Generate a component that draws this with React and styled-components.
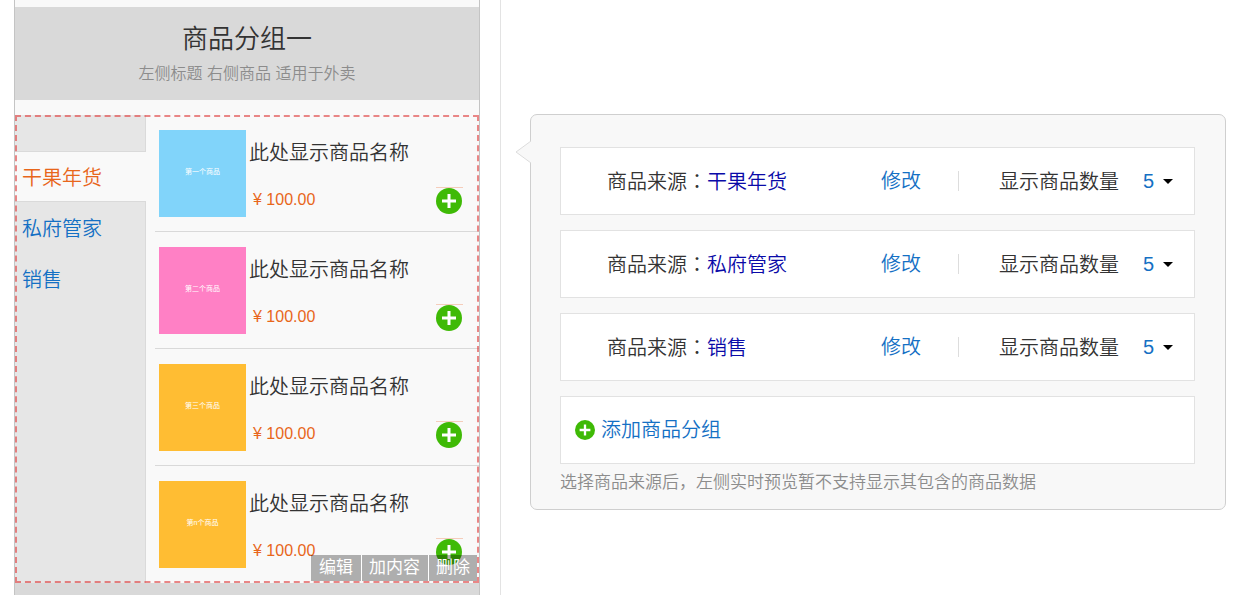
import React, { useState } from 'react';
import styled, { createGlobalStyle } from 'styled-components';

const categories = ['干果年货', '私府管家', '销售'];

const products = [
  { id: 1, cover: '第一个商品', color: '#81d4fa' },
  { id: 2, cover: '第二个商品', color: '#ff80c5' },
  { id: 3, cover: '第三个商品', color: '#ffbd33' },
  { id: 4, cover: '第n个商品', color: '#ffbd33' },
];

const PlusIcon = ({ size }) => (
  <svg width={size} height={size} viewBox="0 0 26 26" aria-hidden="true">
    <circle cx="13" cy="13" r="13" fill="#3fba06" />
    <path d="M13 6v14M6 13h14" stroke="#fff" strokeWidth="3" />
  </svg>
);

const Product = ({ cover, color }) => (
  <StyledProduct>
    <Cover $color={color}>{cover}</Cover>
    <ProductInfo>
      <ProductName>此处显示商品名称</ProductName>
      <Price>¥ 100.00</Price>
    </ProductInfo>
    <AddButton type="button" aria-label="加入">
      <PlusIcon size={26} />
    </AddButton>
  </StyledProduct>
);

const GroupRow = ({ name, index }) => {
  const [count, setCount] = useState('5');

  return (
    <Card>
      <Source>
        商品来源<Colon>：</Colon>
        <SourceLink href="#source">{name}</SourceLink>
      </Source>
      <EditLink href="#edit">修改</EditLink>
      <Divider />
      <CountLabel htmlFor={`count-${index}`}>显示商品数量</CountLabel>
      <SelectWrap>
        <CountSelect
          id={`count-${index}`}
          value={count}
          onChange={(e) => setCount(e.target.value)}
        >
          <option>5</option>
          <option>10</option>
          <option>15</option>
        </CountSelect>
        <Caret width="10" height="5" viewBox="0 0 10 5" aria-hidden="true">
          <path d="M0 0h10L5 5z" fill="#000" />
        </Caret>
      </SelectWrap>
    </Card>
  );
};

const App = () => (
  <>
    <GlobalStyle />
    <Page>
      <Preview>
        <GroupHeader>
          <GroupTitle>商品分组一</GroupTitle>
          <GroupSubtitle>左侧标题 右侧商品 适用于外卖</GroupSubtitle>
        </GroupHeader>
        <GroupBody>
          <Sidebar>
            {categories.map((name, i) => (
              <Category key={name} href="#category" $active={i === 0}>
                {name}
              </Category>
            ))}
          </Sidebar>
          <ProductList>
            {products.map((p) => (
              <Product key={p.id} cover={p.cover} color={p.color} />
            ))}
          </ProductList>
          <Actions>
            <Action type="button">编辑</Action>
            <Action type="button">加内容</Action>
            <Action type="button">删除</Action>
          </Actions>
        </GroupBody>
        <NextBlock />
      </Preview>
      <EditorColumn>
        <Panel>
          <Arrow width="16" height="24" viewBox="0 0 16 24" aria-hidden="true">
            <path d="M16 1L1 12l15 11" fill="#f8f8f8" stroke="#dcdcdc" />
          </Arrow>
          <Cards>
            {categories.map((name, i) => (
              <GroupRow key={name} name={name} index={i} />
            ))}
            <Card $compact>
              <AddGroup type="button">
                <PlusIcon size={20} />
                添加商品分组
              </AddGroup>
            </Card>
          </Cards>
          <Note>选择商品来源后，左侧实时预览暂不支持显示其包含的商品数据</Note>
        </Panel>
      </EditorColumn>
    </Page>
  </>
);

const GlobalStyle = createGlobalStyle`
  * {
    box-sizing: border-box;
  }
  body {
    margin: 0;
    background-color: #fff;
    color: #333;
    font-family: 'Liberation Sans', 'Noto Sans CJK SC', sans-serif;
    font-size: 20px;
    font-weight: 350;
    line-height: 30px;
  }
  a {
    text-decoration: none;
  }
  button, select {
    border: none;
    padding: 0;
    background: none;
    font: inherit;
    cursor: pointer;
  }
`;

const Page = styled.div`
  display: flex;
  height: 100vh;
  overflow: hidden;
`;

const Preview = styled.div`
  display: flex;
  flex-direction: column;
  flex: 0 0 466px;
  margin: 0 20px 0 14px;
  padding-top: 7px;
  border: solid #c4c4c4;
  border-width: 0 1px;
  background-color: #f9f9f9;
`;

const GroupHeader = styled.div`
  padding: 11px 0 14px;
  margin-bottom: 15px;
  background-color: #d9d9d9;
  text-align: center;
`;

const GroupTitle = styled.h1`
  margin: 0 0 2px;
  font-size: 26px;
  font-weight: 350;
  line-height: 42px;
`;

const GroupSubtitle = styled.p`
  margin: 0;
  color: #8c8c8c;
  font-size: 16px;
  line-height: 24px;
`;

const GroupBody = styled.div`
  display: flex;
  position: relative;

  /* dashed frame of the selected block */
  &::after {
    content: '';
    position: absolute;
    inset: 0;
    border: 2px dashed rgba(224, 58, 58, 0.6);
    pointer-events: none;
  }
`;

const Sidebar = styled.nav`
  display: flex;
  flex-direction: column;
  flex: 0 0 131px;
  padding-top: 36px;
  background-color: #e6e6e6;
  box-shadow: inset -1px 0 #dadada;
`;

const Category = styled.a`
  height: 51px;
  padding-left: 7px;
  border: solid ${({ $active }) => ($active ? '#dadada' : 'transparent')};
  border-width: 1px 0;
  background-color: ${({ $active }) => ($active ? '#f9f9f9' : 'transparent')};
  color: ${({ $active }) => ($active ? '#e8661b' : '#1470c4')};
  line-height: 52px;
`;

const ProductList = styled.div`
  flex: 1;
  margin-left: 9px;
`;

const StyledProduct = styled.div`
  display: flex;
  height: 117px;
  padding: 15px 16px 14px 4px;
  border-bottom: 1px solid #d9d9d9;

  &:last-child {
    border-bottom-color: transparent;
  }
`;

const Cover = styled.div`
  width: 87px;
  height: 87px;
  background-color: ${({ $color }) => $color};
  color: #fff;
  font-size: 7px;
  font-weight: 400;
  line-height: 84px;
  text-align: center;
`;

const ProductInfo = styled.div`
  display: flex;
  flex: 1;
  flex-direction: column;
  justify-content: space-between;
  padding: 8px 3px 6px;
`;

const ProductName = styled.div`
  line-height: 30px;
`;

const Price = styled.div`
  padding-left: 4px;
  color: #e8661b;
  font-size: 16px;
  line-height: 22px;
`;

const AddButton = styled.button`
  display: flex;
  align-self: flex-end;
  width: 27px;
  height: 27px;
  margin-bottom: 3px;
  border-top: 1px solid #f5cdbb;
`;

const Actions = styled.div`
  display: flex;
  position: absolute;
  right: 2px;
  bottom: 2px;
  background-color: rgba(0, 0, 0, 0.3);
`;

const Action = styled.button`
  height: 26px;
  padding: 0 7px 0 8px;
  color: #fff;
  font-size: 17px;
  font-weight: 400;
  line-height: 24px;

  & + & {
    padding-left: 7px;
    border-left: 1px solid #fff;
  }

  &:not(:last-child) {
    padding-right: 8px;
  }
`;

const NextBlock = styled.div`
  flex: 1;
  background-color: #d9d9d9;
`;

const EditorColumn = styled.div`
  flex: 1;
  padding: 114px 8px 0 29px;
  border-left: 1px solid #e3e3e3;
`;

const Panel = styled.section`
  position: relative;
  padding: 32px 30px 11px 29px;
  border: 1px solid #cfcfcf;
  border-radius: 7px;
  background-color: #f8f8f8;
`;

const Arrow = styled.svg`
  position: absolute;
  top: 25px;
  left: -16px;
`;

const Cards = styled.div`
  display: flex;
  flex-direction: column;
  gap: 15px;
`;

const Card = styled.div`
  display: flex;
  align-items: center;
  height: 68px;
  padding: 0 20px 0 ${({ $compact }) => ($compact ? '14px' : '46px')};
  border: 1px solid #e2e2e2;
  background-color: #fff;
  line-height: 32px;
`;

const Source = styled.div`
  flex: 1;
  padding-top: 2px;
`;

const SourceLink = styled.a`
  color: #0a0aa8;
`;

/* full-width colon centred in its cell */
const Colon = styled.span`
  font-family: 'Noto Sans CJK TC', sans-serif;
  line-height: 1;
`;

const EditLink = styled.a`
  color: #1470c4;
`;

const Divider = styled.span`
  height: 20px;
  margin: 0 40px 0 37px;
  border-left: 1px solid #ddd;
`;

const CountLabel = styled.label`
  padding-top: 2px;
`;

const SelectWrap = styled.span`
  display: flex;
  align-items: center;
  position: relative;
  margin-left: 24px;
`;

const CountSelect = styled.select`
  width: 31px;
  appearance: none;
  color: #1470c4;
`;

const Caret = styled.svg`
  position: absolute;
  right: 1px;
  pointer-events: none;
`;

const AddGroup = styled.button`
  display: flex;
  align-items: center;
  gap: 6px;
  color: #1470c4;
`;

const Note = styled.p`
  margin: 4px 0 0;
  color: #8c8c8c;
  font-size: 17px;
`;

export default App;
